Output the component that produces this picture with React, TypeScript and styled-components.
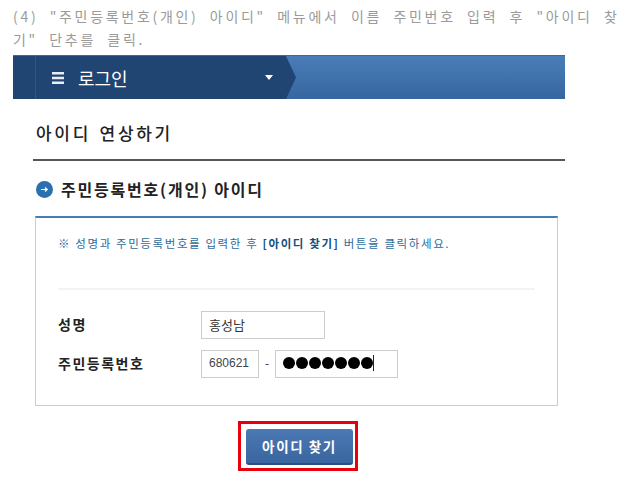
import React from 'react'
import styled, { createGlobalStyle } from 'styled-components'

const GlobalStyle = createGlobalStyle`
  html, body { margin: 0; padding: 0; background: #fff; }
  body { font-family: "Noto Sans CJK KR", "Liberation Sans", sans-serif; }
`

const Page = styled.div`
  width: 621px;
  height: 499px;
  overflow: hidden;
  padding: 5px 0 0 13px;
  box-sizing: border-box;
`

const Intro = styled.p`
  margin: 0;
  width: 608px;
  font-size: 14px;
  line-height: 23px;
  letter-spacing: 2.7px;
  word-spacing: 5.5px;
  color: #9a9a9a;
  white-space: nowrap;
  overflow: hidden;
`

const Bar = styled.div`
  margin-top: 4px;
  width: 552px;
  height: 44px;
  display: flex;
  background: linear-gradient(#4a7db8, #35669f);
  border-top: 1px solid #3a6c8e;
  box-sizing: border-box;
`

const Crumb = styled.div`
  display: flex;
  align-items: center;
  width: 251px;
  height: 100%;
  box-sizing: border-box;
  padding-left: 16px;
  margin-left: 22px;
  border-left: 1px solid #2c5788;
  background: #214573;
  box-shadow: -22px 0 0 #214573;
  color: #fff;
`

const CrumbTip = styled.svg`
  display: block;
  width: 10px;
  height: 43px;
`

const CrumbTitle = styled.span`
  margin-left: 14px;
  font-size: 18px;
  line-height: 20px;
  width: 187px;
`

const Body = styled.div`
  padding-left: 20px;
  width: 532px;
`

const Heading = styled.h2`
  margin: 0;
  padding: 22px 0 14px 3px;
  font-size: 17px;
  line-height: 24px;
  font-weight: 500;
  letter-spacing: 2.7px;
  word-spacing: 2px;
  color: #222;
  border-bottom: 2px solid #555;
`

const SectionTitle = styled.div`
  display: flex;
  align-items: center;
  gap: 8px;
  padding: 17px 0 16px 3px;
  font-size: 16px;
  line-height: 22px;
  font-weight: 700;
  letter-spacing: 1.8px;
  color: #222;
`

const Panel = styled.div`
  width: 523px;
  height: 190px;
  margin-left: 2px;
  padding: 0 22px;
  box-sizing: border-box;
  border: 1px solid #ccc;
  border-top: 2px solid #3f80b6;
  background: #fff;
`

const Note = styled.div`
  padding: 16px 0 36px;
  height: 72px;
  box-sizing: border-box;
  border-bottom: 2px solid #f3f3f3;
  font-size: 11.5px;
  line-height: 18px;
  letter-spacing: 1.6px;
  color: #2c6c9c;
  white-space: nowrap;
`

const NoteStrong = styled.strong`
  color: #14507e;
  font-weight: 700;
`

const Form = styled.div`
  display: grid;
  grid-template-columns: 143px auto;
  row-gap: 11px;
  padding-top: 21px;
  align-items: center;
`

const Label = styled.div`
  padding-bottom: 2px;
  font-size: 14px;
  font-weight: 700;
  color: #222;
  letter-spacing: 1.5px;
`

const Fields = styled.div`
  display: flex;
  align-items: center;
`

const Field = styled.div<{ w: number }>`
  width: ${({ w }) => w}px;
  height: 28px;
  box-sizing: border-box;
  border: 1px solid #ccc;
  padding-left: 7px;
  padding-bottom: 2px;
  display: flex;
  align-items: center;
  font-size: 13px;
  color: #333;
`

const Digits = styled.span`
  font-family: "Liberation Sans", sans-serif;
  font-size: 12px;
  color: #444;
`

const Dash = styled.span`
  width: 16px;
  padding-bottom: 3px;
  text-align: center;
  font-size: 12px;
  color: #333;
`

const Dots = styled.span`
  display: flex;
  gap: 1px;
`

const Dot = styled.i`
  display: block;
  width: 12px;
  height: 12px;
  border-radius: 50%;
  background: #000;
`

const Caret = styled.i`
  display: block;
  width: 1px;
  height: 16px;
  background: #222;
`

const Actions = styled.div`
  display: flex;
  padding: 15px 0 0 205px;
`

const Highlight = styled.div`
  border: 3px solid #e8000f;
  padding: 5px 2px 3px 5px;
`

const FindButton = styled.button`
  display: block;
  width: 107px;
  height: 36px;
  padding: 0;
  border: 0;
  border-radius: 3px;
  border-bottom: 2px solid #2a4f80;
  background: linear-gradient(#4b79b4, #3a669f);
  color: #fff;
  font-family: inherit;
  font-size: 13.5px;
  font-weight: 700;
  letter-spacing: 1.6px;
`

const App = () => (
  <>
    <GlobalStyle />
    <Page>
      <Intro>
        (4) "주민등록번호(개인) 아이디" 메뉴에서 이름 주민번호 입력 후 "아이디 찾
        <br />
        기" 단추를 클릭.
      </Intro>
      <Bar>
        <Crumb>
          <svg width="12" height="12" viewBox="0 0 12 12">
            <path d="M0 0h12v2.4H0zM0 4.8h12v2.4H0zM0 9.6h12V12H0z" fill="#e8eef6" />
          </svg>
          <CrumbTitle>로그인</CrumbTitle>
          <svg width="8" height="5" viewBox="0 0 8 5">
            <path d="M0 0h8L4 5z" fill="#fff" />
          </svg>
        </Crumb>
        <CrumbTip viewBox="0 0 10 43">
          <path d="M0 0L10 21.5L0 43z" fill="#214573" />
        </CrumbTip>
      </Bar>
      <Body>
        <Heading>아이디 연상하기</Heading>
        <SectionTitle>
          <svg width="17" height="17" viewBox="0 0 17 17">
            <circle cx="8.5" cy="8.5" r="8.5" fill="#2a6fae" />
            <path d="M5 8.5h6M9 6.5l2.2 2-2.2 2" stroke="#fff" strokeWidth="1.2" fill="none" />
          </svg>
          주민등록번호(개인) 아이디
        </SectionTitle>
        <Panel>
          <Note>
            ※ 성명과 주민등록번호를 입력한 후 <NoteStrong>[아이디 찾기]</NoteStrong> 버튼을 클릭하세요.
          </Note>
          <Form>
            <Label>성명</Label>
            <Field w={124}>홍성남</Field>
            <Label>주민등록번호</Label>
            <Fields>
              <Field w={58}>
                <Digits>680621</Digits>
              </Field>
              <Dash>-</Dash>
              <Field w={123}>
                <Dots>
                  {Array.from({ length: 7 }, (_, i) => (
                    <Dot key={i} />
                  ))}
                </Dots>
                <Caret />
              </Field>
            </Fields>
          </Form>
        </Panel>
        <Actions>
          <Highlight>
            <FindButton>아이디 찾기</FindButton>
          </Highlight>
        </Actions>
      </Body>
    </Page>
  </>
)

export default App
